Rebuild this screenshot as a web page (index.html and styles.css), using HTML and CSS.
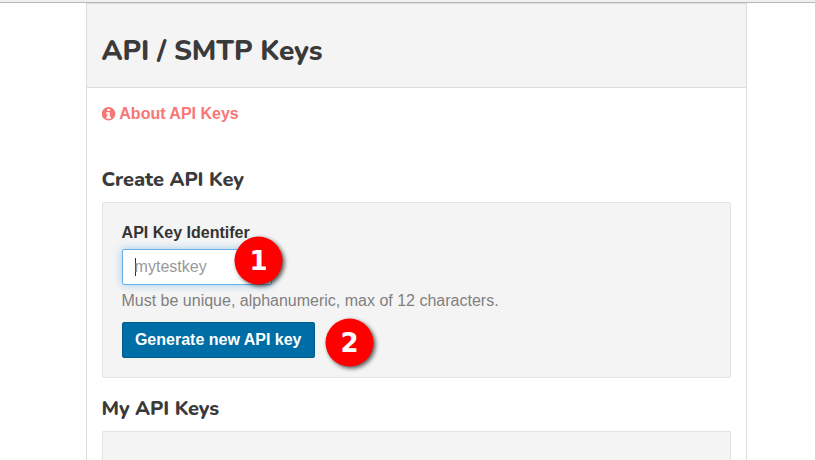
FILE: index.html
```html
<!DOCTYPE html>
<html lang="en">
<head>
<meta charset="utf-8">
<title>API / SMTP Keys</title>
<link rel="stylesheet" href="styles.css">
</head>
<body>
<div class="topbar"></div>
<main class="page">
  <header class="page-header"><h1>API / SMTP Keys</h1></header>
  <div class="content">
    <a class="about">
      <svg class="info" viewBox="0 0 14 14"><circle cx="6.6" cy="6.8" r="6.8" fill="currentColor"/><path fill="#fff" d="M5.3 2h2.6v2H5.3zM4.3 5.2h3.6v4.6h1v2H4.3v-2h1V7.2h-1z"/></svg>
      <span>About API Keys</span>
    </a>
    <h2>Create API Key</h2>
    <form class="well create">
      <label for="key">API Key Identifer</label>
      <div class="field"><div class="input" id="key"><span class="caret"></span>mytestkey</div><span class="badge badge-one">1</span></div>
      <p class="help">Must be unique, alphanumeric, max of 12 characters.</p>
      <div class="field"><button type="button">Generate new API key</button><span class="badge badge-two">2</span></div>
    </form>
    <h2 class="mine">My API Keys</h2>
    <div class="well list"></div>
  </div>
</main>
</body>
</html>
```
FILE: styles.css
```css
* { box-sizing: border-box; }
html { height: 460px; overflow: hidden; }
body { display: flex; flex-direction: column; margin: 0; height: 460px; overflow: hidden; background: #fff; font: 16px/20px "Liberation Sans", Arial, sans-serif; color: #333; }
.topbar { flex: none; height: 3px; background: #f0f0f0; border-bottom: 1px solid #b8b8b8; }
.page { display: flex; flex-direction: column; flex: 1; min-height: 0; overflow: hidden; width: 661px; margin-left: 86px; border: 1px solid #ddd; border-bottom: 0; }
.page-header { flex: none; height: 84px; padding: 29px 14.5px 0; background: #f4f4f4; border-bottom: 1px solid #ddd; }
h1, h2 { margin: 0; font-family: Nunito, "Nunito Sans", "Open Sans", sans-serif; font-weight: 760; letter-spacing: -.07px; color: #3a3a3a; }
h1 { font-size: 28px; line-height: 36px; }
.content { display: flex; flex-direction: column; flex: 1; min-height: 0; padding: 16px 15px 0; }
.about { display: flex; flex: none; align-items: center; gap: 3.6px; height: 20px; margin-left: -.3px; color: #f87676; font-weight: 700; }
.info { width: 14px; height: 14px; margin-top: -1px; }
h2 { flex: none; margin-top: 42px; margin-left: -.5px; font-size: 20px; line-height: 28px; }
.well { background: #f4f4f4; border: 1px solid #e2e2e2; border-radius: 2px; }
.create { flex: none; height: 176px; margin-top: 8px; padding: 20px 19px 0; }
label { display: block; margin-left: -.4px; font-weight: 700; }
.field { position: relative; }
.input { width: 150px; height: 36px; margin-top: 6px; padding: 8px 12px; line-height: 18px; color: #999; background: #fff; border: 1px solid #66afe9; border-radius: 2px; box-shadow: 0 0 8px rgba(102,175,233,.6); }
.caret { display: inline-block; width: 1px; height: 18px; margin-right: -1.4px; background: #333; vertical-align: top; }
.help { margin: 6px 0 11px -.5px; color: #808080; }
button { display: block; width: 193px; height: 36px; padding: 0 .6px 0 0; font: 700 16px "Liberation Sans", Arial, sans-serif; color: #fff; background: #006ea6; border: 1px solid #005c8c; border-radius: 2px; }
.badge { position: absolute; width: 48px; height: 48px; border-radius: 50%; background: #f00; color: #fff; text-align: center; font: 700 26px/48px "DejaVu Sans", sans-serif; box-shadow: 2px 2px 4px rgba(0,0,0,.65); transform: translate(.5px, -.4px); }
.badge-one { left: 112px; top: -12px; }
.badge-two { left: 203px; top: -3px; }
.mine { margin-top: 17px; }
.list { flex: 1; min-height: 0; margin-top: 8px; border-bottom: 0; border-radius: 2px 2px 0 0; }
```
